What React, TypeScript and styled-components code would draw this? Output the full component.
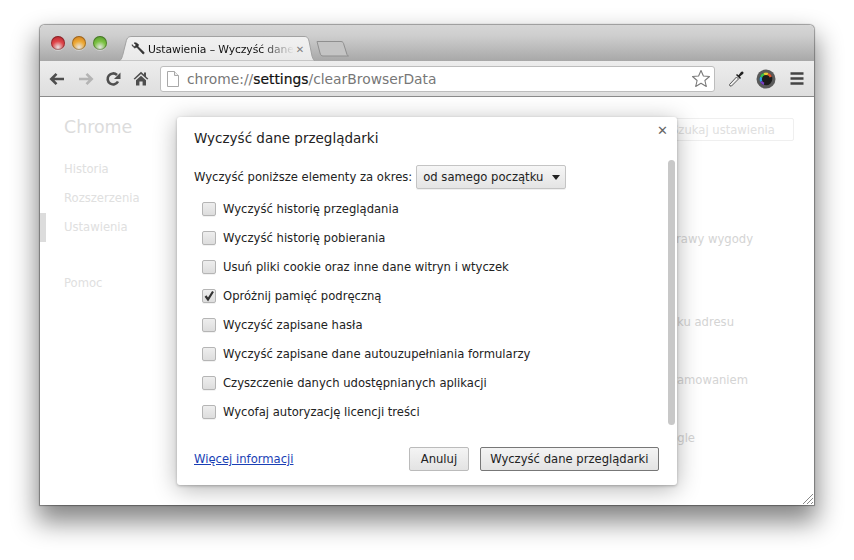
import React from "react";
import styled, { createGlobalStyle } from "styled-components";

const GlobalStyle = createGlobalStyle`
  html, body {
    margin: 0;
    padding: 0;
    background: #fff;
    overflow: hidden;
  }
  body {
    font-family: "DejaVu Sans", "Noto Sans", sans-serif;
  }
`;

const Stage = styled.div`
  width: 854px;
  height: 560px;
  padding: 25px 0 0 40px;
  box-sizing: border-box;
`;

const Window = styled.div`
  position: relative;
  width: 774px;
  height: 480px;
  border-radius: 5px 5px 0 0;
  display: flex;
  flex-direction: column;
  background: #fff;
  box-shadow: 0 0 1px 0.5px rgba(0, 0, 0, 0.35), 0 14px 26px 3px rgba(0, 0, 0, 0.48);
`;

const TitleBar = styled.div`
  height: 36px;
  flex: none;
  border-radius: 5px 5px 0 0;
  background: linear-gradient(#d6d6d6, #cecece 30%, #a8a8a8);
  display: flex;
  align-items: flex-end;
  padding-left: 11px;
  box-sizing: border-box;
`;

const Lights = styled.div`
  display: flex;
  gap: 7px;
  align-self: flex-start;
  margin-top: 11px;
`;

const Light = styled.span<{ $c: string; $d: string }>`
  width: 14px;
  height: 14px;
  border-radius: 50%;
  box-shadow: inset 0 0 0 1px rgba(0, 0, 0, 0.28), 0 1px 0 rgba(255, 255, 255, 0.35);
  background: radial-gradient(circle at 50% 80%, #ffffff99 0, ${(p) => p.$c} 45%, ${(p) => p.$d} 100%);
`;

const Tab = styled.div`
  position: relative;
  width: 197px;
  height: 25px;
  margin-left: 11px;
  display: flex;
  align-items: center;
  padding: 1px 11px 0 13px;
  box-sizing: border-box;
  font-size: 10.8px;
  letter-spacing: -0.1px;
  color: #111;
`;

const TabShape = styled.svg`
  position: absolute;
  left: 0;
  top: 0;
`;

const TabIcon = styled.svg`
  position: relative;
  flex: none;
  margin-right: 3px;
`;

const TabTitle = styled.span`
  position: relative;
  flex: none;
  white-space: nowrap;
  -webkit-mask-image: linear-gradient(90deg, #000 78%, transparent 100%);
  mask-image: linear-gradient(90deg, #000 78%, transparent 100%);
`;

const TabClose = styled.span`
  position: relative;
  flex: none;
  margin-left: auto;
  color: #808080;
  font-size: 10px;
  font-weight: bold;
`;

const NewTab = styled.svg`
  flex: none;
  margin: 0 0 4px 1px;
`;

const ToolBar = styled.div`
  height: 36px;
  flex: none;
  box-sizing: border-box;
  background: linear-gradient(#ededed, #dedede);
  border-bottom: 1px solid #8b8b8b;
  display: flex;
  align-items: center;
  padding: 0 11px 0 9px;
`;

const ToolIcon = styled.svg<{ $gap?: number }>`
  flex: none;
  margin-left: ${(p) => p.$gap ?? 0}px;
`;

const Omnibox = styled.div`
  flex: none;
  width: 555px;
  height: 26px;
  box-sizing: border-box;
  margin: 0 13px 0 11px;
  display: flex;
  align-items: center;
  padding: 0 3px 0 6px;
  background: #fff;
  border: 1px solid #bdbdbd;
  border-radius: 3px;
  font-size: 13.85px;
  color: #777;
`;

const Url = styled.span`
  flex: 1;
  margin-left: 8px;
  white-space: nowrap;

  b {
    font-weight: normal;
    color: #111;
    -webkit-text-stroke: 0.2px #111;
  }
`;

const Page = styled.div`
  flex: 1;
  display: flex;
  min-height: 0;
  background: #fff;
  color: #e0e0e0;
  font-size: 11.6px;
`;

const Sidebar = styled.nav`
  width: 155px;
  flex: none;
  padding-top: 19px;
`;

const Brand = styled.div`
  font-size: 17.4px;
  line-height: 22px;
  padding-left: 24px;
  color: #dcdcdc;
  margin-bottom: 17px;
`;

const NavItem = styled.div<{ $active?: boolean; $space?: number }>`
  height: 29px;
  line-height: 29px;
  padding-left: ${(p) => (p.$active ? 18 : 24)}px;
  margin-top: ${(p) => p.$space ?? 0}px;
  border-left: ${(p) => (p.$active ? "6px solid #dcdcdc" : "none")};
`;

const Main = styled.main`
  flex: 1;
  display: flex;
  flex-direction: column;
  align-items: flex-end;
  padding: 21px 20px 0 0;
  color: #d4d4d4;
`;

const SearchBox = styled.div`
  width: 124px;
  height: 23px;
  box-sizing: border-box;
  border: 1px solid #efefef;
  border-radius: 2px;
  line-height: 22px;
  text-align: right;
  padding-right: 22px;
  margin-bottom: 88px;
  white-space: nowrap;
  color: #e0e0e0;
`;

const BackLine = styled.div<{ $end: number; $after: number }>`
  height: 20px;
  line-height: 20px;
  margin-right: ${(p) => p.$end}px;
  margin-bottom: ${(p) => p.$after}px;
  white-space: nowrap;
`;

const Grip = styled.svg`
  position: absolute;
  right: 0;
  bottom: 0;
`;

const Dialog = styled.div`
  position: absolute;
  left: 137px;
  top: 92px;
  width: 500px;
  height: 368px;
  box-sizing: border-box;
  padding: 12px 16px 14px 17px;
  border-radius: 3px;
  background: #fff;
  color: #222;
  font-size: 11.6px;
  box-shadow: 0 4px 23px rgba(0, 0, 0, 0.3), 0 1px 3px rgba(0, 0, 0, 0.25);
  display: flex;
  flex-direction: column;
`;

const DialogTitle = styled.h1`
  margin: 0;
  font-size: 13.5px;
  font-weight: normal;
  line-height: 18px;
  color: #222;
`;

const Close = styled.span`
  position: absolute;
  right: 9px;
  top: 6px;
  font-size: 13px;
  line-height: 16px;
  font-weight: bold;
  color: #666;
`;

const ScrollThumb = styled.div`
  position: absolute;
  right: 2px;
  top: 43px;
  width: 7px;
  height: 265px;
  border-radius: 4px;
  background: #c8c8c8;
`;

const PeriodRow = styled.div`
  display: flex;
  align-items: center;
  gap: 4px;
  margin-top: 18px;
  height: 24px;
`;

const SelectBox = styled.div`
  width: 150px;
  height: 24px;
  box-sizing: border-box;
  border: 1px solid #c4c4c4;
  border-radius: 2px;
  background: linear-gradient(#f6f6f6, #e4e4e4);
  box-shadow: 0 1px 0 rgba(0, 0, 0, 0.06);
  display: flex;
  align-items: center;
  justify-content: space-between;
  padding: 0 5px 0 6px;
  color: #222;
`;

const Caret = styled.span`
  width: 0;
  height: 0;
  border-left: 4.5px solid transparent;
  border-right: 4.5px solid transparent;
  border-top: 5px solid #222;
`;

const Options = styled.div`
  margin-top: 5px;
  padding-left: 8px;
  display: flex;
  flex-direction: column;
`;

const OptionRow = styled.label`
  height: 29px;
  display: flex;
  align-items: center;
  gap: 7px;
  white-space: nowrap;
`;

const Check = styled.span`
  width: 14px;
  height: 14px;
  box-sizing: border-box;
  flex: none;
  border: 1px solid #b5b5b5;
  border-radius: 2px;
  background: linear-gradient(#eeeeee, #dddddd);
  box-shadow: 0 1px 0 rgba(0, 0, 0, 0.05);
  display: flex;
  align-items: center;
  justify-content: center;
`;

const Footer = styled.div`
  margin-top: auto;
  display: flex;
  align-items: center;
  gap: 11px;
  padding-right: 2px;
`;

const MoreLink = styled.a`
  margin-right: auto;
  color: #1a3fb5;
  text-decoration: underline;
`;

const Button = styled.button<{ $primary?: boolean }>`
  height: 24px;
  padding: 0 ${(p) => (p.$primary ? 9.5 : 10.5)}px;
  box-sizing: border-box;
  font-family: inherit;
  font-size: 11.6px;
  color: #222;
  border: 1px solid ${(p) => (p.$primary ? "#777" : "#bbb")};
  border-radius: 2px;
  background: linear-gradient(#f4f4f4, #e3e3e3);
  white-space: nowrap;
`;

const options = [
  { label: "Wyczyść historię przeglądania" },
  { label: "Wyczyść historię pobierania" },
  { label: "Usuń pliki cookie oraz inne dane witryn i wtyczek" },
  { label: "Opróżnij pamięć podręczną", checked: true },
  { label: "Wyczyść zapisane hasła" },
  { label: "Wyczyść zapisane dane autouzupełniania formularzy" },
  { label: "Czyszczenie danych udostępnianych aplikacji" },
  { label: "Wycofaj autoryzację licencji treści" },
];

const App = () => {
  return (
    <Stage>
      <GlobalStyle />
      <Window>
        <TitleBar>
          <Lights>
            <Light $c="#e0454a" $d="#a81e25" />
            <Light $c="#eda935" $d="#c9741a" />
            <Light $c="#7cc243" $d="#4c8f26" />
          </Lights>
          <Tab>
            <TabShape width="197" height="25" viewBox="0 0 197 25">
              <defs>
                <linearGradient id="tabFill" x1="0" y1="0" x2="0" y2="1">
                  <stop offset="0" stopColor="#f1f1f1" />
                  <stop offset="1" stopColor="#e9e9e9" />
                </linearGradient>
              </defs>
              <path
                d="M0 25C3 25 4 22 5 18L8 6C9 1 11 .5 14 .5H186C189 .5 190 1.500 191 5L194 20C195 23 196 25 197 25Z"
                fill="url(#tabFill)"
                stroke="#a2a2a2"
              />
            </TabShape>
            <TabIcon width="14" height="14" viewBox="0 0 14 14">
              <path
                d="M1 3.5 3.6 6 5.8 5.2 12 12 13 11.6 13.2 10.4 7 4.6 7.6 2.6 5 .8 3 .9 5 2.8 4.4 4.3 3 4.7 1.2 2.6Z"
                fill="#333"
                stroke="#333"
                strokeWidth=".6"
              />
            </TabIcon>
            <TabTitle>Ustawienia – Wyczyść dane</TabTitle>
            <TabClose>✕</TabClose>
          </Tab>
          <NewTab width="33" height="17" viewBox="0 0 33 17">
            <path
              d="M1 1.5H25C27 1.5 27.5 3 28 5L30.5 13C31 15 31.5 16 32.500 16H7C5.500 16 4.500 15 4 13L1 1.500Z"
              fill="#c4c4c4"
              stroke="#8f8f8f"
            />
          </NewTab>
        </TitleBar>
        <ToolBar>
          <ToolIcon width="16" height="14" viewBox="0 0 16 14">
            <path d="M15 7H3M7.500 1.800 2.300 7l5.200 5.200" fill="none" stroke="#4e4e4e" strokeWidth="2.600" />
          </ToolIcon>
          <ToolIcon $gap={13} width="16" height="14" viewBox="0 0 16 14">
            <path d="M1 7H13M8.500 1.800 13.700 7l-5.200 5.200" fill="none" stroke="#b4b4b4" strokeWidth="2.600" />
          </ToolIcon>
          <ToolIcon $gap={11} width="16" height="16" viewBox="0 0 16 16">
            <path d="M13 10.500A5.500 5.500 0 1 1 12 4" fill="none" stroke="#4e4e4e" strokeWidth="2.600" />
            <path d="M15.500 1.500V8H9Z" fill="#4e4e4e" />
          </ToolIcon>
          <ToolIcon $gap={12} width="16" height="15" viewBox="0 0 16 15">
            <path
              d="M8 .8 .6 7.800 1.800 8.600 8 3 14.200 8.600 15.400 7.800 13 5.500V1.500H11V3.600ZM3 9.200 8 4.800 13 9.200V14.500H9.600V10.500H6.400V14.500H3Z"
              fill="#4e4e4e"
            />
          </ToolIcon>
          <Omnibox>
            <ToolIcon width="12" height="16" viewBox="0 0 12 16">
              <path d="M.5.500H7.500L11.500 4.500V15.500H.5Z" fill="#fff" stroke="#a8a8a8" />
              <path d="M7.500.500V4.500H11.500" fill="#eee" stroke="#a8a8a8" />
            </ToolIcon>
            <Url>
              chrome://<b>settings</b>/clearBrowserData
            </Url>
            <ToolIcon width="20" height="19" viewBox="0 0 20 19">
              <path
                d="M10 1.500 12.400 7 18.500 7.500 13.900 11.500 15.300 17.500 10 14.300 4.700 17.500 6.100 11.500 1.500 7.500 7.600 7Z"
                fill="#fff"
                stroke="#7a7a7a"
                strokeWidth="1.100"
                strokeLinejoin="round"
              />
            </ToolIcon>
          </Omnibox>
          <ToolIcon width="17" height="18" viewBox="0 0 17 18">
            <path d="M2 16 1.500 14.500 8.500 7 10.500 9 3.500 16Z" fill="#eee" stroke="#555" />
            <path d="M8 5 12 9 13 8 11.800 6.500 15 4C16.500 2.500 14.500.5 13 2L10.500 5.200 9 4Z" fill="#222" />
          </ToolIcon>
          <ToolIcon $gap={11} width="20" height="20" viewBox="0 0 20 20">
            <circle cx="10" cy="10" r="9.500" fill="#5a5a5a" />
            <circle cx="10" cy="10" r="6.300" fill="#1c1c1c" />
            <g fill="none" strokeWidth="2.400">
              <path d="M5.200 12.500A5.200 5.200 0 0 1 5.200 8" stroke="#2f9fe0" />
              <path d="M5.200 8A5.200 5.200 0 0 1 8 5.200" stroke="#3cc04a" />
              <path d="M8 5.200A5.200 5.200 0 0 1 12 5.200" stroke="#e8d030" />
              <path d="M12 5.200A5.200 5.200 0 0 1 14.800 8" stroke="#e0542c" />
              <path d="M5.200 12.500A5.200 5.200 0 0 0 8 14.800" stroke="#7a3fc8" />
            </g>
          </ToolIcon>
          <ToolIcon $gap={14} width="14" height="13" viewBox="0 0 14 13">
            <path d="M.5 1.500H13.500M.5 6.500H13.500M.5 11.500H13.500" stroke="#444" strokeWidth="2.400" />
          </ToolIcon>
        </ToolBar>
        <Page>
          <Sidebar>
            <Brand>Chrome</Brand>
            <NavItem>Historia</NavItem>
            <NavItem>Rozszerzenia</NavItem>
            <NavItem $active>Ustawienia</NavItem>
            <NavItem $space={27}>Pomoc</NavItem>
          </Sidebar>
          <Main>
            <SearchBox>Szukaj ustawienia</SearchBox>
            <BackLine $end={41} $after={63}>Poprawy wygody</BackLine>
            <BackLine $end={60} $after={38}>Pasku adresu</BackLine>
            <BackLine $end={46} $after={38}>Zarządzanie ramowaniem</BackLine>
            <BackLine $end={99} $after={0}>Google</BackLine>
          </Main>
        </Page>
        <Dialog>
          <DialogTitle>Wyczyść dane przeglądarki</DialogTitle>
          <Close>✕</Close>
          <ScrollThumb />
          <PeriodRow>
            Wyczyść poniższe elementy za okres:
            <SelectBox>
              od samego początku
              <Caret />
            </SelectBox>
          </PeriodRow>
          <Options>
            {options.map((o) => (
              <OptionRow key={o.label}>
                <Check>
                  {o.checked && (
                    <svg width="12" height="12" viewBox="0 0 12 12">
                      <path d="M2.500 6 5 9.500 10 1.500" fill="none" stroke="#333" strokeWidth="2.200" />
                    </svg>
                  )}
                </Check>
                {o.label}
              </OptionRow>
            ))}
          </Options>
          <Footer>
            <MoreLink href="#">Więcej informacji</MoreLink>
            <Button>Anuluj</Button>
            <Button $primary>Wyczyść dane przeglądarki</Button>
          </Footer>
        </Dialog>
        <Grip width="12" height="12" viewBox="0 0 12 12">
          <path d="M1 11 11 1M5 11 11 5M9 11 11 9" stroke="#888" strokeWidth="1" />
        </Grip>
      </Window>
    </Stage>
  );
};

export default App;
